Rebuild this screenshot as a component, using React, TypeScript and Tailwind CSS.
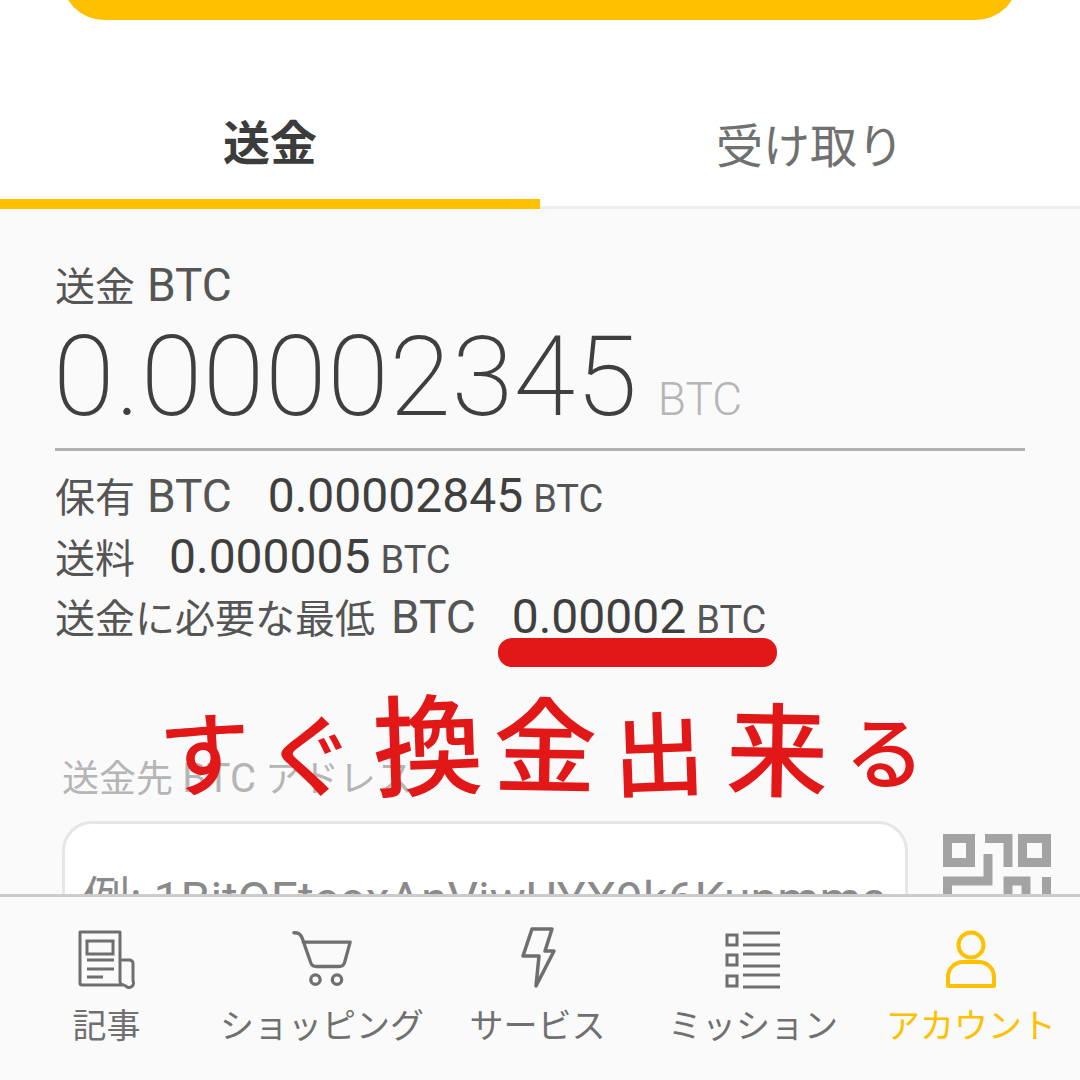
const cjk = "font-['Roboto','Noto_Sans_CJK_JP',sans-serif]";

// bottom nav icons
const NewsIcon = () => (
  <svg width="60" height="60" viewBox="0 0 60 60" fill="none" stroke="#6f6f6f" strokeWidth="3">
    <path d="M3 3h40v49a4 4 0 0 0 4 4H5a2 2 0 0 1-2-2z" strokeLinejoin="round" />
    <path d="M43 31h10a4 4 0 0 1 3 3v18a4 4 0 0 1-8 4" strokeLinejoin="round" />
    <rect x="10" y="12" width="26" height="13" />
    <path d="M10 31h27M10 40h27M10 48h16" />
  </svg>
);

const CartIcon = () => (
  <svg width="60" height="60" viewBox="0 0 64 62" fill="none" stroke="#6f6f6f" strokeWidth="3.500">
    <path d="M2 3c5 0 7 1 9 6l9 26c1 3 3 4 6 4h24c3 0 5-1 6-4l6-22H12" strokeLinejoin="round" strokeLinecap="round" />
    <circle cx="25" cy="53" r="5" />
    <circle cx="48" cy="53" r="5" />
  </svg>
);

const BoltIcon = () => (
  <svg width="36" height="62" viewBox="0 0 36 62" fill="none" stroke="#6f6f6f" strokeWidth="3.500" strokeLinejoin="round">
    <path d="M12 2h20l-7 22h9L16 59l3-30H3z" />
  </svg>
);

const ListIcon = () => (
  <svg width="56" height="58" viewBox="0 0 56 58" fill="none" stroke="#6f6f6f" strokeWidth="3">
    <rect x="2" y="4" width="10" height="10" />
    <rect x="2" y="24" width="10" height="10" />
    <rect x="2" y="45" width="10" height="10" />
    <path d="M18 2h37M18 14h37M18 23h37M18 35h37M18 44h37M18 56h37" />
  </svg>
);

const UserIcon = () => (
  <svg width="52" height="60" viewBox="0 0 52 60" fill="none" stroke="#ffc000" strokeWidth="4">
    <circle cx="26" cy="16" r="12.500" />
    <path d="M3 57V48a15 15 0 0 1 15-15h16a15 15 0 0 1 15 15v9z" strokeLinejoin="round" />
  </svg>
);

const QrIcon = () => (
  <svg width="108" height="108" viewBox="0 0 108 108" fill="none" stroke="#a3a3a3" strokeWidth="9" className="block">
    <rect x="4.500" y="4.500" width="23" height="24" />
    <rect x="79.500" y="4.500" width="24" height="24" />
    <path d="M42 4.500h23V33M45 20v27H4.500v36" />
    <path d="M65 75V47h18v28M103.500 43v40" />
  </svg>
);

const navItems = [
  { label: "記事", icon: <NewsIcon />, width: "w-[213px]", active: false },
  { label: "ショッピング", icon: <CartIcon />, width: "w-[218px]", active: false },
  { label: "サービス", icon: <BoltIcon />, width: "w-[213px]", active: false },
  { label: "ミッション", icon: <ListIcon />, width: "w-[218px]", active: false },
  { label: "アカウント", icon: <UserIcon />, width: "w-[218px]", active: true },
];

// hand written note, real text with each character sized and tilted by hand
const handwriting = [
  { c: "す", cls: "ml-[5px] translate-y-[8px] text-[92px] -rotate-3" },
  { c: "ぐ", cls: "-ml-[15px] translate-y-[9px] text-[90px] rotate-2" },
  { c: "換", cls: "-ml-[2px] text-[110px] -rotate-2" },
  { c: "金", cls: "-ml-[3px] text-[104px] rotate-1" },
  { c: "出", cls: "-ml-[6px] translate-y-[8px] text-[92px] -rotate-2" },
  { c: "来", cls: "-ml-[2px] translate-y-[4px] text-[102px] rotate-1" },
  { c: "る", cls: "-ml-[12px] translate-y-[6px] text-[80px] rotate-2" },
];

const Btc = () => <span className="ml-[2px] text-[46px]">BTC</span>;

const Amount = ({ value, className = "ml-[36px]" }: { value: string; className?: string }) => (
  <span className={`${className} text-[48px] text-[#3f3f3f]`}>{value}</span>
);

const Unit = () => <span className="ml-[10px] text-[38px]">BTC</span>;

export default function App() {
  return (
    <div className={`relative h-[1080px] w-[1080px] overflow-hidden bg-[#fafafa] ${cjk}`}>
      {/* top button + tabs */}
      <div className="flex h-[209px] flex-col bg-white">
        <div className="mx-[62px] -mt-[40px] h-[60px] shrink-0 rounded-b-[42px] bg-[#ffc000]" />
        <div className="flex h-[189px] border-b-[3px] border-[#eeeeee]">
          <div className="relative flex w-[540px] items-center justify-center pt-[62px] text-[47px] font-bold text-[#3c3c3c]">
            送金
            <div className="absolute -bottom-[3px] left-0 h-[10px] w-full bg-[#ffc000]" />
          </div>
          <div className="flex w-[540px] items-center justify-center pt-[68px] text-[47px] text-[#707070]">
            受け取り
          </div>
        </div>
      </div>

      {/* amount */}
      <div className="px-[55px] pt-[51px]">
        <div className="h-[50px] text-[40px] leading-[50px] text-[#555555]">送金 <Btc /></div>
        <div className="mt-[12px] flex h-[129px] items-baseline border-b-[3px] border-[#b0b0b0] font-extralight text-[#3f3f3f]">
          <span className="-ml-[2px] text-[112px] leading-[110px] tracking-[0.5px]">0.00002345</span>
          <span className="ml-[20px] text-[46px] leading-[50px] font-light text-[#b5b5b5]">BTC</span>
        </div>

        <div className="mt-[14px] flex h-[61px] items-baseline text-[40px] leading-[61px] whitespace-pre text-[#555555]">
          <span>保有 <Btc /></span>
          <Amount value="0.00002845" />
          <Unit />
        </div>
        <div className="flex h-[61px] items-baseline text-[40px] leading-[61px] text-[#555555]">
          <span>送料</span>
          <Amount value="0.000005" className="ml-[34px]" />
          <Unit />
        </div>
        <div className="-mt-[1px] flex h-[61px] items-baseline text-[40px] leading-[61px] whitespace-pre text-[#555555]">
          <span>送金に必要な最低 <span className="ml-[6px] text-[46px]">BTC</span></span>
          <Amount value="0.00002" />
          <Unit />
        </div>

        {/* address field, runs under the nav bar */}
        <div className="mt-[107px] h-[50px] pl-[7px] text-[37px] leading-[50px] text-[#b5b5b5]">送金先 <span className="text-[40px]">BTC</span> アドレス</div>
        <div className="mt-[17px] flex items-start pl-[7px]">
          <div className="h-[150px] w-[846px] shrink-0 rounded-[30px] border-[3px] border-[#e6e6e6] bg-white pl-[17px] pt-[40px] text-[48px] whitespace-nowrap text-[#8a8a8a]">
            例: 1BitQEtcoxAnViwUYX9k6Kupmms
          </div>
          <div className="ml-[35px] mt-[13px] shrink-0"><QrIcon /></div>
        </div>
      </div>

      {/* red marker annotation */}
      <div className="absolute left-[498px] top-[638px] h-[29px] w-[279px] rounded-[14px] bg-[#e21818]" />
      <div className="absolute left-[140px] top-[685px] flex h-[130px] items-center font-medium text-[#e21818]">
        {handwriting.map((h) => (
          <span key={h.c} className={`w-[120px] text-center leading-[130px] ${h.cls}`}>{h.c}</span>
        ))}
      </div>

      {/* bottom nav */}
      <nav className="absolute bottom-0 left-0 flex h-[186px] w-full border-t-[3px] border-[#cccccc] bg-[#fafafa]">
        {navItems.map((item) => (
          <div key={item.label} className={`flex ${item.width} flex-col items-center`}>
            <div className="flex h-[92px] items-end justify-center">{item.icon}</div>
            <div className={`mt-[14px] text-[34px] leading-[46px] whitespace-nowrap ${item.active ? "text-[#ffc000]" : "text-[#707070]"}`}>
              {item.label}
            </div>
          </div>
        ))}
      </nav>
    </div>
  );
}
